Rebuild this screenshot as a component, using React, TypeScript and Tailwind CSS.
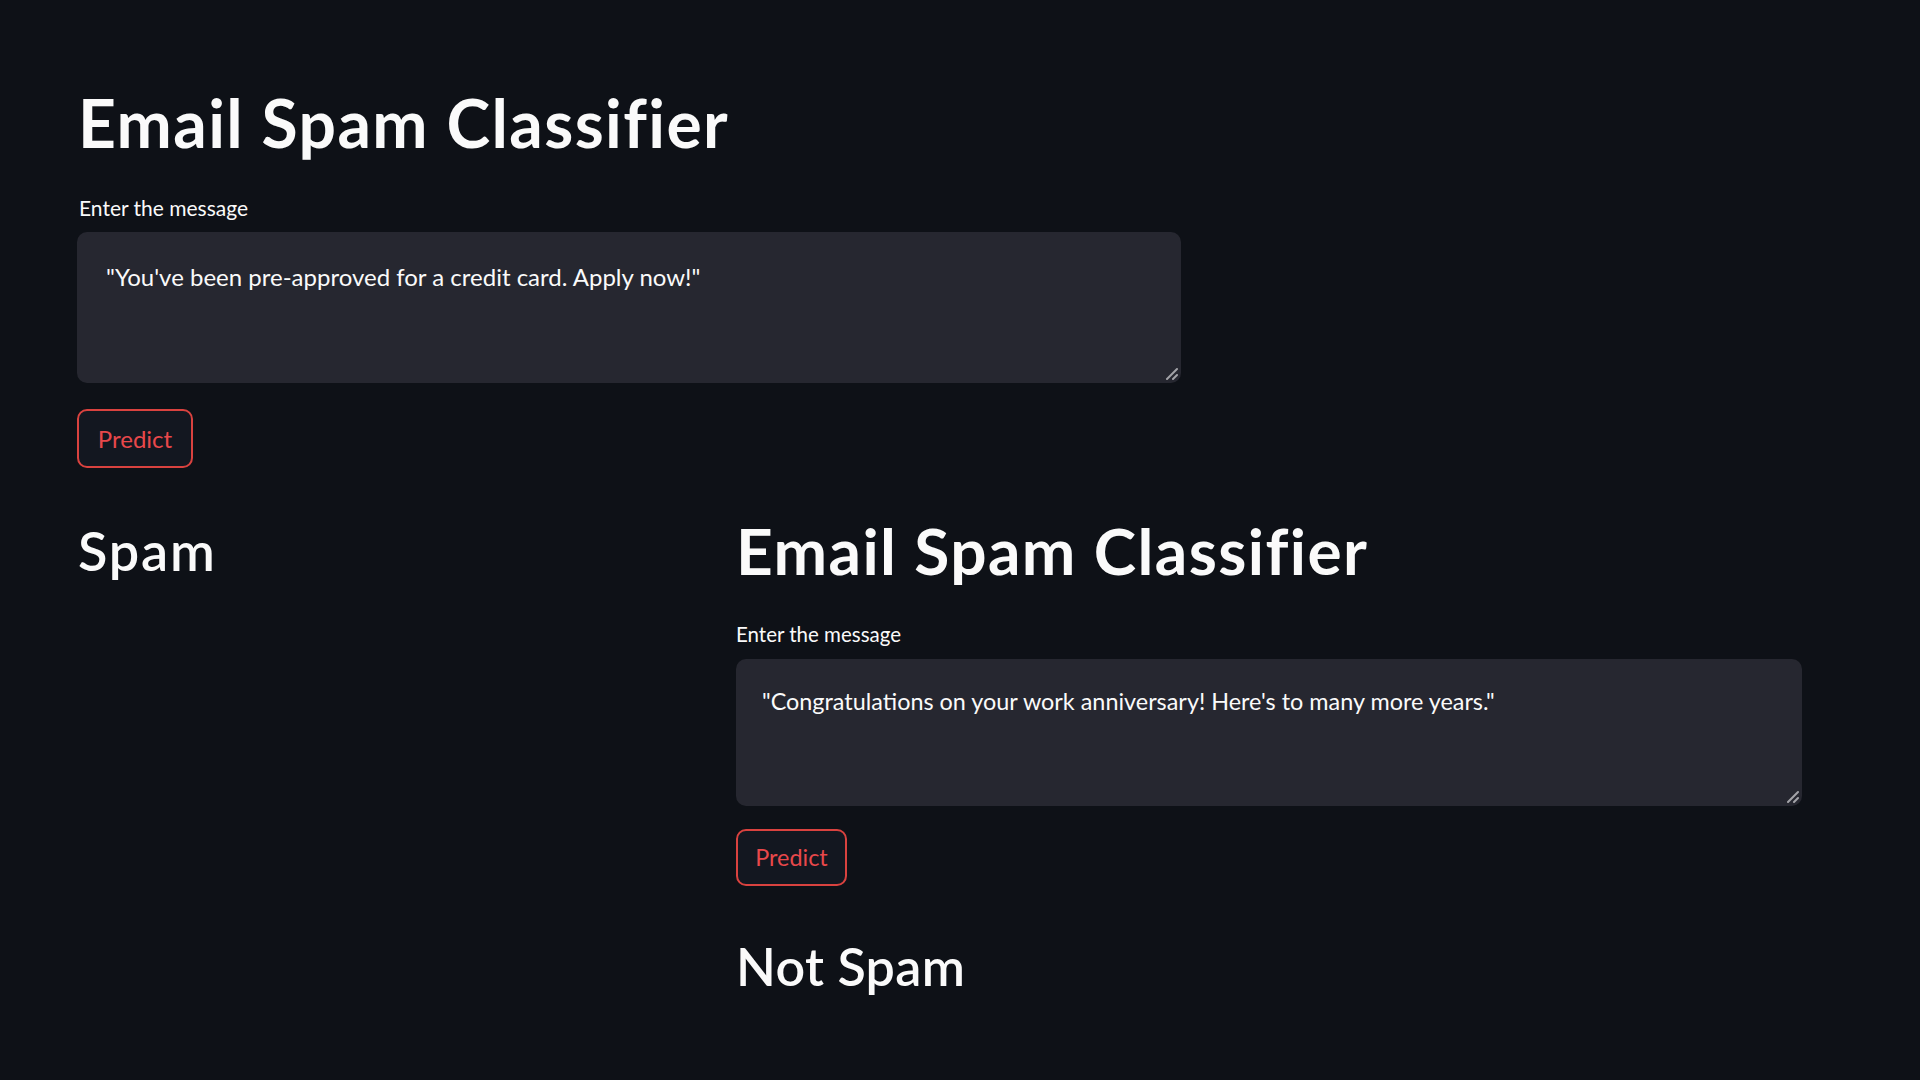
import React from "react";

const Grip = () => (
  <svg
    className="absolute right-[3px] bottom-[3px]"
    width="13"
    height="13"
    viewBox="0 0 13 13"
    fill="none"
  >
    <path d="M2 12 L12 2" stroke="#a3a3a8" strokeWidth="2" strokeLinecap="round" />
    <path d="M8 12 L12 8" stroke="#a3a3a8" strokeWidth="2" strokeLinecap="round" />
  </svg>
);

export default function App() {
  return (
    <div
      className="min-h-screen w-full bg-[#0e1117] text-[#fafafa] overflow-hidden"
      style={{ fontFamily: "Lato, 'Noto Sans', sans-serif" }}
    >
      <div className="pl-[78px] pt-[83px] flex flex-col">
        {/* First app */}
        <h1 className="text-[66px] font-bold leading-[1.2] tracking-[1.4px] text-[#fafafa]">
          Email Spam Classifier
        </h1>
        <label className="mt-[33px] ml-[1px] text-[21px] leading-[1.2] text-[#fafafa]">
          Enter the message
        </label>
        <div className="relative mt-[12px] ml-[-1px] w-[1104px] h-[151px] rounded-[10px] bg-[#262730] pl-[29px] pt-[31px]">
          <p className="text-[24px] leading-[1.2] text-[#fafafa]">
            "You've been pre-approved for a credit card. Apply now!"
          </p>
          <Grip />
        </div>
        <div className="mt-[26px] ml-[-1px]">
          <button className="h-[59px] w-[116px] rounded-[10px] border-2 border-[#d9423f] bg-[#131720] text-[24px] text-[#e8484b] flex items-center justify-center">
            Predict
          </button>
        </div>

        {/* Result row + second app */}
        <div className="mt-[45px] flex items-start">
          <div className="w-[658px] pt-[6px]">
            <h2 className="text-[54px] font-semibold leading-[1.2] tracking-[1.8px] text-[#fafafa]">
              Spam
            </h2>
          </div>
          <div className="flex flex-col">
            <h1 className="text-[64px] font-bold leading-[1.2] tracking-[1.4px] text-[#fafafa]">
              Email Spam Classifier
            </h1>
            <label className="mt-[32px] text-[20.5px] leading-[1.2] text-[#fafafa]">
              Enter the message
            </label>
            <div className="relative mt-[12px] w-[1066px] h-[147px] rounded-[10px] bg-[#262730] pl-[26px] pt-[28px]">
              <p className="text-[23.4px] leading-[1.2] text-[#fafafa]">
                "Congratulations on your work anniversary! Here's to many more years."
              </p>
              <Grip />
            </div>
            <div className="mt-[23px]">
              <button className="h-[57px] w-[111px] rounded-[10px] border-2 border-[#d9423f] bg-[#131720] text-[23.4px] text-[#e8484b] flex items-center justify-center">
                Predict
              </button>
            </div>
            <h2 className="mt-[49px] text-[52px] font-semibold leading-[1.2] tracking-[0.3px] text-[#fafafa]">
              Not Spam
            </h2>
          </div>
        </div>
      </div>
    </div>
  );
}
